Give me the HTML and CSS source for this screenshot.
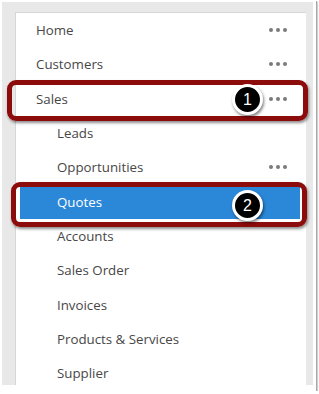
FILE: index.html
```html
<!DOCTYPE html>
<html lang="en">

<head>
    <meta charset="UTF-8">
    <meta name="viewport" content="width=device-width, initial-scale=1.0">
    <title>Sales Menu</title>
    <link rel="stylesheet" href="styles.css">
</head>

<body>
    <div class="frame">
        <div class="shell">
            <div class="panel">
                <div class="row">Home<span class="more"><i></i><i></i><i></i></span></div>
                <div class="row">Customers<span class="more"><i></i><i></i><i></i></span></div>
                <div class="row">Sales<span class="more"><i></i><i></i><i></i></span></div>
                <div class="row sub">Leads</div>
                <div class="row sub">Opportunities<span class="more"><i></i><i></i><i></i></span></div>
                <div class="row sub selected">Quotes</div>
                <div class="row sub">Accounts</div>
                <div class="row sub">Sales Order</div>
                <div class="row sub">Invoices</div>
                <div class="row sub">Products &amp; Services</div>
                <div class="row sub">Supplier</div>
            </div>
        </div>

        <!-- callouts drawn over the screenshot -->
        <div class="callout callout-sales"></div>
        <div class="callout callout-quotes"></div>
        <div class="badge badge-one">1</div>
        <div class="badge badge-two">2</div>
    </div>
</body>

</html>
```

FILE: styles.css
```css
body {
    margin: 0;
    padding: 0;
    background-color: white;
    font-family: "Open Sans", "Noto Sans", sans-serif;
}

.frame {
    position: relative;
    width: 316px;
    height: 391px;
    padding: 2px 3px 6px 2px;
    box-sizing: border-box;
    background-color: white;
    box-shadow: 1px 1px 0 #a8a8a8, 2px 2px 1px #d0d0d0;
}

.shell {
    height: 383px;
    padding: 10px 7px 0 13px;
    box-sizing: border-box;
    background-color: #e8e8e8;
    overflow: hidden;
}

.panel {
    height: 100%;
    background-color: white;
    border-top: 1px solid #d6d6d6;
    border-left: 1px solid #d6d6d6;
}

.row {
    display: flex;
    align-items: center;
    height: 34.3px;
    padding: 0 19px 0 20px;
    font-size: 13.3px;
    color: #474747;
}

.row.sub {
    padding-left: 41px;
}

.row.selected {
    margin: 0 6px 0 4px;
    padding-left: 37px;
    background-color: #2b87d8;
    color: white;
}

.more {
    display: flex;
    gap: 3px;
    margin-left: auto;
}

.more i {
    width: 4px;
    height: 4px;
    border-radius: 50%;
    background-color: #7a7a7a;
}

.callout {
    position: absolute;
    border: 5px solid #8c0b0b;
    border-radius: 9px;
    box-sizing: border-box;
    box-shadow: 1px 2px 3px rgba(0, 0, 0, 0.45);
}

.callout-sales {
    left: 7px;
    top: 80px;
    width: 301px;
    height: 41px;
}

.callout-quotes {
    left: 11px;
    top: 182px;
    width: 296px;
    height: 45px;
}

.badge {
    position: absolute;
    width: 31px;
    height: 31px;
    border: 3px solid white;
    border-radius: 50%;
    box-sizing: border-box;
    background-color: black;
    color: white;
    font-family: "Liberation Sans", Arial, sans-serif;
    font-size: 16px;
    line-height: 25px;
    text-align: center;
    box-shadow: 1px 2px 3px rgba(0, 0, 0, 0.5);
}

.badge-one {
    left: 232px;
    top: 84px;
}

.badge-two {
    left: 232px;
    top: 190px;
}
```
